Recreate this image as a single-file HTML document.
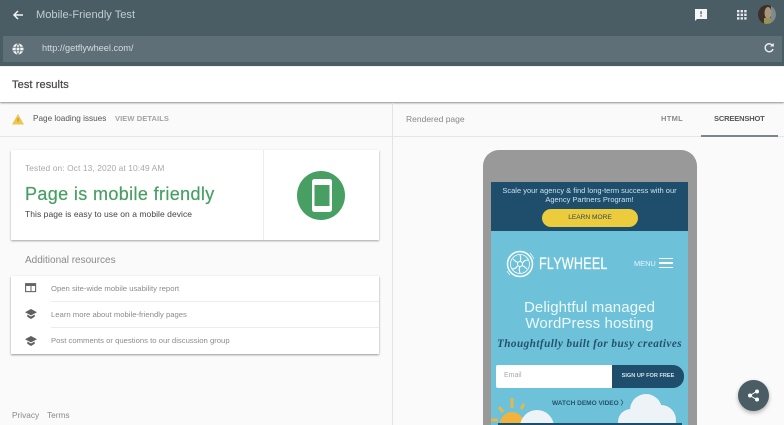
<!DOCTYPE html>
<html><head><meta charset="utf-8">
<style>
html,body{margin:0;padding:0;width:784px;height:425px;overflow:hidden}
body{background:#fafafa;font-family:"Liberation Sans",sans-serif;color:#444}
#w{position:absolute;left:0;top:0;width:784px;height:425px;overflow:hidden;background:#fafafa;filter:blur(.3px)}
.a{position:absolute;white-space:nowrap}
svg{position:absolute;overflow:visible}
</style></head><body><div id="w">
<!-- header -->
<div class="a" style="left:0;top:0;width:784px;height:66px;background:#4a5c64"></div>
<div class="a" style="left:3px;top:36px;width:779px;height:26px;background:#5e6f77"></div>
<svg style="left:12px;top:9px" width="12" height="12" viewBox="0 0 12 12"><path d="M11 6H2M6 2L2 6l4 4" fill="none" stroke="#f0f3f4" stroke-width="1.5"/></svg>
<div class="a" style="left:36px;top:8px;font-size:11.100px;line-height:15px;color:#c4cdd1">Mobile-Friendly Test</div>
<svg style="left:12px;top:43px" width="12" height="12" viewBox="0 0 12 12"><circle cx="6" cy="6" r="5.5" fill="#f2f4f5"/><path d="M.5 4.200h11M.5 7.800h11M6 .5C3.500 3.500 3.500 8.500 6 11.500M6 .5c2.500 3 2.500 8 0 11" stroke="#5e6f77" stroke-width=".8" fill="none"/></svg>
<div class="a" style="left:42px;top:42px;font-size:9.200px;line-height:13px;color:#d5dcdf">http://getflywheel.com/</div>
<svg style="left:695px;top:8.500px" width="12" height="12" viewBox="0 0 12 12"><path d="M0 0h12v10H2l-2 2z" fill="#f4f6f7"/><rect x="5.400" y="2.200" width="1.300" height="3" fill="#4a5c64"/><rect x="5.400" y="6.200" width="1.300" height="1.400" fill="#4a5c64"/></svg>
<svg style="left:737px;top:9.500px" width="10" height="10" viewBox="0 0 10 10" fill="#e6eaec"><rect x="0" y="0" width="2.400" height="2.400"/><rect x="3.600" y="0" width="2.400" height="2.400"/><rect x="7.200" y="0" width="2.400" height="2.400"/><rect x="0" y="3.600" width="2.400" height="2.400"/><rect x="3.600" y="3.600" width="2.400" height="2.400"/><rect x="7.200" y="3.600" width="2.400" height="2.400"/><rect x="0" y="7.200" width="2.400" height="2.400"/><rect x="3.600" y="7.200" width="2.400" height="2.400"/><rect x="7.200" y="7.200" width="2.400" height="2.400"/></svg>
<svg style="left:758px;top:5px" width="18" height="19" viewBox="0 0 18 19"><defs><clipPath id="c"><ellipse cx="9" cy="9.500" rx="9" ry="9.500"/></clipPath></defs><g clip-path="url(#c)"><rect width="18" height="19" fill="#3c3029"/><rect x="13" width="5" height="19" fill="#7d8a8e"/><ellipse cx="10" cy="8" rx="3.500" ry="6" fill="#a8957c"/><rect x="6" y="13" width="7" height="6" fill="#99935a"/></g></svg>
<svg style="left:764px;top:43px" width="10" height="10" viewBox="0 0 10 10"><path d="M8.500 2.500A4 4 0 1 0 9 6" fill="none" stroke="#eef1f2" stroke-width="1.400"/><path d="M6 3.500h3.800V0z" fill="#eef1f2"/></svg>
<!-- white bar -->
<div class="a" style="left:0;top:67px;width:784px;height:35px;background:#fff;box-shadow:0 1px 2px rgba(0,0,0,.45)"></div>
<div class="a" style="left:12px;top:77.500px;font-size:11px;line-height:15px;color:#4a4a4a;letter-spacing:.1px;-webkit-text-stroke:.25px #4a4a4a">Test results</div>
<!-- sub row -->
<div class="a" style="left:0;top:136px;width:784px;height:1px;background:#e6e6e6"></div>
<div class="a" style="left:392px;top:103px;width:1px;height:322px;background:#e3e3e3"></div>
<svg style="left:12px;top:114px" width="12" height="11" viewBox="0 0 12 11"><path d="M6 0l6 10.500H0z" fill="#eec64a"/><rect x="5.500" y="4" width="1" height="3.500" fill="#a08a40"/></svg>
<div class="a" style="left:33px;top:113px;font-size:8.200px;line-height:12px;color:#555">Page loading issues</div>
<div class="a" style="left:115px;top:113px;font-size:7.500px;line-height:12px;color:#a3a3a3;font-weight:bold;letter-spacing:.1px">VIEW DETAILS</div>
<div class="a" style="left:406px;top:113px;font-size:8.500px;line-height:12px;color:#888">Rendered page</div>
<div class="a" style="left:661px;top:113px;font-size:7.500px;line-height:12px;color:#8a8a8a;font-weight:bold;letter-spacing:.3px">HTML</div>
<div class="a" style="left:714px;top:113px;font-size:7.500px;line-height:12px;color:#555;font-weight:bold;letter-spacing:-.15px">SCREENSHOT</div>
<div class="a" style="left:701px;top:135px;width:77px;height:2px;background:#7c868b"></div>
<!-- card -->
<div class="a" style="left:11px;top:150px;width:368px;height:90px;background:#fff;box-shadow:0 1px 2px rgba(0,0,0,.35)"></div>
<div class="a" style="left:263px;top:150px;width:1px;height:90px;background:#ececec"></div>
<div class="a" style="left:25px;top:162px;font-size:8.400px;line-height:12px;color:#a9a9a9;letter-spacing:.1px">Tested on: Oct 13, 2020 at 10:49 AM</div>
<div class="a" style="left:25px;top:183px;font-size:18px;line-height:22px;color:#479f63;letter-spacing:.37px;-webkit-text-stroke:.2px #479f63">Page is mobile friendly</div>
<div class="a" style="left:25px;top:208px;font-size:8.500px;line-height:12px;color:#444;letter-spacing:.05px">This page is easy to use on a mobile device</div>
<svg style="left:297px;top:171px" width="48" height="49" viewBox="0 0 48 49"><ellipse cx="24" cy="24.500" rx="24" ry="24.500" fill="#479f63"/><rect x="15" y="8" width="20" height="33" rx="2.500" fill="#fff"/><rect x="17.500" y="14" width="15" height="21" fill="#479f63"/></svg>
<!-- resources -->
<div class="a" style="left:25px;top:254px;font-size:10px;line-height:14px;color:#8a8a8a">Additional resources</div>
<div class="a" style="left:11px;top:276px;width:368px;height:78px;background:#fff;box-shadow:0 1px 2px rgba(0,0,0,.4)"></div>
<div class="a" style="left:51px;top:301px;width:328px;height:1px;background:#ececec"></div>
<div class="a" style="left:51px;top:327px;width:328px;height:1px;background:#ececec"></div>
<svg style="left:25px;top:283px" width="12" height="10" viewBox="0 0 12 10"><rect x=".6" y=".6" width="10" height="8" fill="none" stroke="#666" stroke-width="1.100"/><rect x=".6" y=".6" width="10" height="2.400" fill="#666"/><path d="M6 3v5.500" stroke="#666"/></svg>
<svg style="left:25px;top:309px" width="12" height="10" viewBox="0 0 12 10" fill="#5f5f5f"><path d="M6 0l6 3.200-6 3.200-6-3.200z"/><path d="M2.300 5.500L6 7.500l3.700-2v2.300L6 10 2.300 7.800z"/></svg>
<svg style="left:25px;top:335.500px" width="12" height="10" viewBox="0 0 12 10" fill="#5f5f5f"><path d="M6 0l6 3.200-6 3.200-6-3.200z"/><path d="M2.300 5.500L6 7.500l3.700-2v2.300L6 10 2.300 7.800z"/></svg>
<div class="a" style="left:51px;top:282.500px;font-size:7.700px;line-height:12px;color:#8c8c8c">Open site-wide mobile usability report</div>
<div class="a" style="left:51px;top:308.500px;font-size:7.700px;line-height:12px;color:#8c8c8c">Learn more about mobile-friendly pages</div>
<div class="a" style="left:51px;top:335px;font-size:7.700px;line-height:12px;color:#8c8c8c">Post comments or questions to our discussion group</div>
<div class="a" style="left:12px;top:409px;font-size:8.300px;line-height:12px;color:#8a8a8a">Privacy</div>
<div class="a" style="left:47px;top:409px;font-size:8.300px;line-height:12px;color:#8a8a8a">Terms</div>
<!-- phone -->
<div class="a" style="left:483px;top:150px;width:214px;height:275px;background:#999;border-radius:16px 16px 0 0"></div>
<div class="a" style="left:491px;top:182px;width:197px;height:243px;background:#6dc2da;overflow:hidden"></div>
<div class="a" style="left:491px;top:182px;width:197px;height:49px;background:#1f4d6c"></div>
<div class="a" style="left:491px;top:186px;width:197px;text-align:center;font-size:7.500px;line-height:9px;color:#c9e3ec;white-space:normal">Scale your agency &amp; find long-term success with our<br>Agency Partners Program!</div>
<div class="a" style="left:542px;top:209px;width:96px;height:18px;background:#eccb3d;border-radius:9px;text-align:center;font-size:6.600px;line-height:18px;color:#2c4d5c">LEARN MORE</div>
<svg style="left:506px;top:249px" width="30" height="30" viewBox="0 0 30 30" fill="none" stroke="#fff"><circle cx="14" cy="15" r="12.500" stroke-width="1.500"/><circle cx="14" cy="15" r="9.500" stroke-width=".8"/><circle cx="14" cy="15" r="2.500" stroke-width="1"/><path d="M14 6c1 3 1 4 0 6.500M22 11c-3 0-4 1-5.500 3M21 20c-2-2-3-3-5-3.500M14 24c-1-3-1-4 0-6.500M6 20c3 0 4-1 5.500-3M7 10c2 2 3 3 5 3.500" stroke-width="1.100"/><path d="M24 4c2 2 3 4 4 6M4 26c-1-1-2-2-3-4" stroke-width=".7"/></svg>
<div class="a" style="left:539px;top:254px;font-size:17px;line-height:20px;color:#fff;letter-spacing:.3px;transform:scaleX(.74);transform-origin:left;-webkit-text-stroke:.2px #fff">FLYWHEEL</div>
<div class="a" style="left:634px;top:258px;font-size:7.400px;line-height:12px;color:#e8f5f9">MENU</div>
<div class="a" style="left:659px;top:257.500px;width:14px;height:10.500px;border-top:1.500px solid #fff;border-bottom:1.500px solid #fff;box-sizing:border-box"></div>
<div class="a" style="left:659px;top:262px;width:14px;height:1.500px;background:#fff"></div>
<div class="a" style="left:491px;top:300px;width:197px;text-align:center;font-size:15px;line-height:15.500px;color:#eef8fb;white-space:normal;letter-spacing:.1px">Delightful managed<br>WordPress hosting</div>
<div class="a" style="left:491px;top:337px;width:197px;text-align:center;font-family:'Liberation Serif',serif;font-style:italic;font-size:11.200px;line-height:14px;color:#24526d;letter-spacing:.45px;font-weight:bold">Thoughtfully built for busy creatives</div>
<div class="a" style="left:496px;top:365px;width:116px;height:23px;background:#fff;border-radius:2px 0 0 2px"></div>
<div class="a" style="left:504px;top:371px;font-size:7px;line-height:10px;color:#a8a8a8">Email</div>
<div class="a" style="left:612px;top:365px;width:72px;height:23px;background:#1f4d6c;border-radius:0 11px 11px 0;text-align:center;font-size:5.600px;line-height:23px;color:#cfe3ea;font-weight:bold">SIGN UP FOR FREE</div>
<div class="a" style="left:552px;top:399px;font-size:6.500px;line-height:10px;color:#27506c;font-weight:bold">WATCH DEMO VIDEO 〉</div>
<svg style="left:491px;top:395px" width="197" height="30" viewBox="0 0 197 30">
<circle cx="21" cy="29" r="12" fill="#f2b33d"/>
<path d="M21 3v10M8 12l4 5M33 9l-3 5M0 25h7" stroke="#e9b749" stroke-width="3" fill="none"/>
<circle cx="46" cy="32" r="17" fill="#edf3f6"/>
<g fill="#edf3f6"><circle cx="155" cy="15" r="16"/><circle cx="140" cy="27" r="13"/><circle cx="170" cy="25" r="15"/><rect x="140" y="22" width="30" height="8"/></g>
<rect x="7" y="28" width="184" height="2" fill="#1f4d6c"/>
</svg>
<!-- fab -->
<div class="a" style="left:738px;top:380px;width:31px;height:31px;border-radius:50%;background:#4a5c64;box-shadow:0 2px 4px rgba(0,0,0,.3)"></div>
<svg style="left:747px;top:389px" width="13" height="13" viewBox="0 0 13 13"><path d="M9.500 2.500L3 6.500l6.500 4" fill="none" stroke="#fff" stroke-width="1"/><circle cx="10" cy="2.500" r="2" fill="#fff"/><circle cx="3" cy="6.500" r="2" fill="#fff"/><circle cx="10" cy="10.500" r="2" fill="#fff"/></svg>
</div></body></html>
